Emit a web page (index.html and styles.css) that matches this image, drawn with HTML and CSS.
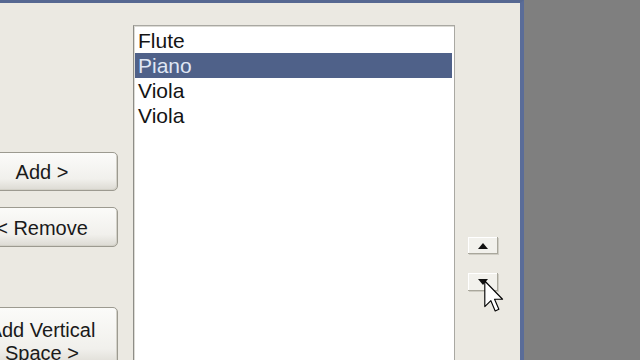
FILE: index.html
```html
<!DOCTYPE html>
<html>
<head>
<meta charset="utf-8">
<link rel="stylesheet" href="styles.css">
</head>
<body>
<div class="screen">
  <div class="window">
    <div class="content">
      <div class="actions">
        <button class="btn btn-add">Add &gt;</button>
        <button class="btn btn-remove">&lt; Remove</button>
        <button class="btn btn-space">Add Vertical<br>Space &gt;</button>
      </div>
      <div class="listbox">
        <div class="item">Flute</div>
        <div class="item selected">Piano</div>
        <div class="item">Viola</div>
        <div class="item">Viola</div>
      </div>
      <div class="order">
        <button class="mini"><span class="tri up"></span></button>
        <button class="mini"><span class="tri down"></span></button>
      </div>
    </div>
    <svg class="cursor" width="20" height="34" viewBox="0 0 12.5 21">
      <path d="M0.5 0.5 L0.5 16.5 L4.3 12.8 L7 19.2 L9.3 18.2 L6.6 11.9 L11.6 11.9 Z" fill="#ffffff" stroke="#000000" stroke-width="0.7" stroke-linejoin="round"/>
    </svg>
  </div>
  <div class="desktop"></div>
</div>
</body>
</html>
```
FILE: styles.css
```css
html, body {
  margin: 0;
  padding: 0;
  width: 640px;
  height: 360px;
  overflow: hidden;
  background: #7f7f7f;
  font-family: "Liberation Sans", Arial, sans-serif;
}
.screen {
  display: flex;
  width: 640px;
  height: 360px;
}
.window {
  position: relative;
  width: 520px;
  height: 357px;
  background: #ebe9e2;
  border-top: 3px solid #566891;
  border-right: 4px solid #5a6c98;
  overflow: hidden;
}
.desktop {
  flex: 1;
  background: #7f7f7f;
}
.content {
  display: flex;
  align-items: flex-start;
  margin-left: -34px;
}
.actions {
  display: flex;
  flex-direction: column;
  width: 152px;
  padding-top: 149px;
  margin-right: 15px;
}
.btn {
  width: 152px;
  border: 1px solid #9c9a90;
  border-radius: 5px;
  background: linear-gradient(#fbfbf9, #f1f0ec 70%, #dcdad3);
  font-family: "Liberation Sans", Arial, sans-serif;
  font-size: 20px;
  color: #1a1a1a;
  padding: 0;
  text-align: center;
  box-shadow: inset -1px -1px 0 #d3d1c8;
}
.btn-add {
  height: 39px;
  padding-top: 2px;
}
.btn-remove {
  height: 40px;
  margin-top: 16px;
  padding-top: 2px;
}
.btn-space {
  height: 60px;
  margin-top: 60px;
  line-height: 23px;
  padding-top: 10px;
  align-self: flex-start;
  display: block;
}
.listbox {
  width: 322px;
  height: 340px;
  margin-top: 22px;
  background: #ffffff;
  border: 1px solid #a9a8a2;
  border-left-color: #8e8d87;
  box-shadow: inset 1px 1px 0 #dcdbd5;
  padding: 2px 2px 0 1px;
  box-sizing: border-box;
}
.item {
  height: 25px;
  line-height: 25px;
  font-size: 21px;
  color: #141414;
  padding-left: 3px;
}
.item.selected {
  background: #4f6189;
  color: #dfe6f4;
}
.order {
  display: flex;
  flex-direction: column;
  gap: 19px;
  margin-left: 13px;
  padding-top: 234px;
}
.mini {
  width: 30px;
  height: 17px;
  padding: 0;
  border: none;
  background: #f2f1ec;
  box-shadow: inset -1px -1px 0 #a9a79c, inset 1px 1px 0 #ffffff, 1px 1px 0 #cfcdc4;
  display: flex;
  align-items: center;
  justify-content: center;
}
.mini + .mini {
  height: 18px;
}
.tri {
  width: 0;
  height: 0;
  border-left: 5px solid transparent;
  border-right: 5px solid transparent;
}
.tri.up {
  border-bottom: 6px solid #111111;
}
.tri.down {
  border-top: 6px solid #111111;
}
.cursor {
  position: absolute;
  left: 484px;
  top: 277px;
}
```
